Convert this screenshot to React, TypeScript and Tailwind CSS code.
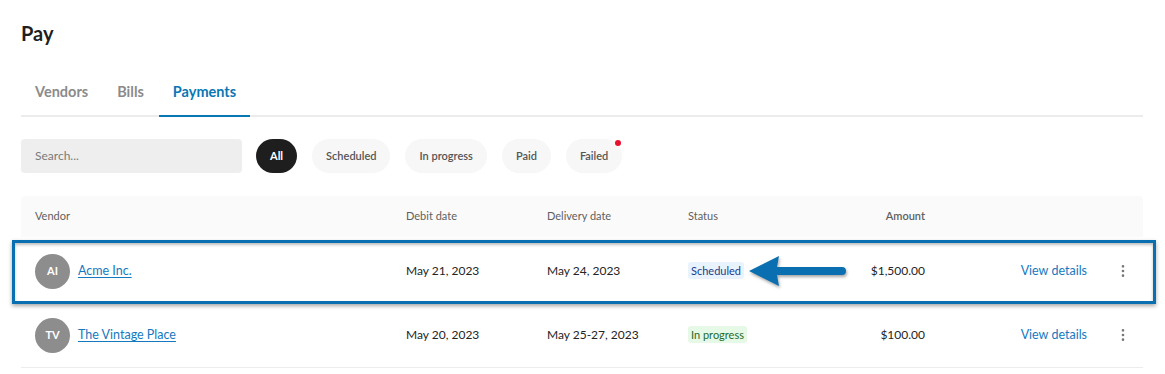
import { MoreVertical } from "lucide-react"

type Payment = {
  initials: string
  vendor: string
  debit: string
  delivery: string
  status: "Scheduled" | "In progress"
  amount: string
}

const payments: Payment[] = [
  { initials: "AI", vendor: "Acme Inc.", debit: "May 21, 2023", delivery: "May 24, 2023", status: "Scheduled", amount: "$1,500.00" },
  { initials: "TV", vendor: "The Vintage Place", debit: "May 20, 2023", delivery: "May 25-27, 2023", status: "In progress", amount: "$100.00" },
]

const filters = ["All", "Scheduled", "In progress", "Paid", "Failed"]

function StatusBadge({ status }: { status: Payment["status"] }) {
  if (status === "Scheduled") {
    return <span className="px-[3px] py-[2px] rounded-[3px] text-[11px] bg-[#e8f3fd] text-[#1d3b8c]">Scheduled</span>
  }
  return <span className="px-[3px] py-[2px] rounded-[3px] text-[11px] bg-[#e6f8e6] text-[#1f6b2a]">In progress</span>
}

function Arrow() {
  return (
    <svg className="absolute left-[727px] top-[15px] drop-shadow-[1px_2px_1.5px_rgba(0,0,0,0.35)]" width="100" height="32" viewBox="0 0 100 32">
      <path d="M1 16 L31 1 L29 12 L94 12 A4 4 0 0 1 94 20 L29 20 L31 31 Z" fill="#0a6fb0" />
    </svg>
  )
}

function Row({ p, highlight }: { p: Payment; highlight?: boolean }) {
  return (
    <div className="relative flex items-center h-[64px] border-b border-[#ececec] text-[12px] text-[#242424]">
      <div className="w-[385px] pl-[14px] flex items-center gap-[8px]">
        <div className="w-[35px] h-[35px] rounded-full bg-[#8d8d8d] text-white text-[11px] font-bold flex items-center justify-center">
          {p.initials}
        </div>
        <a className="text-[12.5px] text-[#1479bf] underline underline-offset-2">{p.vendor}</a>
      </div>
      <div className="w-[141px]">{p.debit}</div>
      <div className="w-[141px]">{p.delivery}</div>
      <div className="w-[124px]">
        <StatusBadge status={p.status} />
      </div>
      <div className="w-[113px] text-right">{p.amount}</div>
      <div className="w-[162px] text-right text-[12.5px] text-[#1479bf]">View details</div>
      <div className="flex-1 flex justify-center pl-[16px] text-[#777]">
        <MoreVertical size={16} strokeWidth={2} />
      </div>
      {highlight && (
        <>
          <div className="absolute left-[-9px] right-[-13px] top-[0px] bottom-[-1px] border-[3px] border-[#0a6fb0] shadow-[0_2px_4px_rgba(0,0,0,0.35),inset_0_2px_3px_rgba(0,0,0,0.25)] pointer-events-none" />
          <Arrow />
        </>
      )}
    </div>
  )
}

export default function App() {
  return (
    <div className="w-[1165px] h-[374px] bg-white overflow-hidden font-['Lato','Noto_Sans',sans-serif]">
      <div className="pl-[21px] pr-[22px]">
        <h1 className="pt-[20px] text-[20px] font-bold text-[#1f1f1f] leading-[26px]">Pay</h1>

        <div className="mt-[34px] flex border-b-2 border-[#ececec] text-[14.5px] font-bold">
          <div className="px-[14px] pt-[1px] pb-[12px] text-[#8b8b8b]">Vendors</div>
          <div className="px-[15px] pt-[1px] pb-[12px] text-[#8b8b8b]">Bills</div>
          <div className="px-[14px] pt-[1px] pb-[10px] text-[#0a77b5] border-b-2 border-[#0a77b5] -mb-[2px]">Payments</div>
        </div>

        <div className="mt-[22px] flex items-center">
          <div className="w-[221px] h-[34px] rounded-[4px] bg-[#eeeeee] flex items-center pl-[14px] text-[12px] text-[#7a7a7a]">
            Search...
          </div>
          <div className="ml-[14px] flex gap-[15px]">
            {filters.map((f) => (
              <div
                key={f}
                className={
                  f === "All"
                    ? "h-[34px] px-[14px] rounded-full bg-[#1e1e1e] text-white text-[11px] font-bold flex items-center"
                    : "relative h-[34px] px-[14px] rounded-full bg-[#f7f7f7] text-[#555] text-[11px] font-semibold flex items-center"
                }
              >
                {f}
                {f === "Failed" && <span className="absolute right-[1px] top-[1px] w-[6px] h-[6px] rounded-full bg-[#e8112d]" />}
              </div>
            ))}
          </div>
        </div>

        <div className="mt-[23px]">
          <div className="flex items-center h-[41px] bg-[#fafafa] rounded-t-[4px] text-[11px] text-[#5f5f5f]">
            <div className="w-[385px] pl-[14px]">Vendor</div>
            <div className="w-[141px]">Debit date</div>
            <div className="w-[141px]">Delivery date</div>
            <div className="w-[124px]">Status</div>
            <div className="w-[113px] text-right font-semibold">Amount</div>
          </div>
          <div className="h-[3px]" />
          {payments.map((p, i) => (
            <Row key={p.vendor} p={p} highlight={i === 0} />
          ))}
        </div>
      </div>
    </div>
  )
}
